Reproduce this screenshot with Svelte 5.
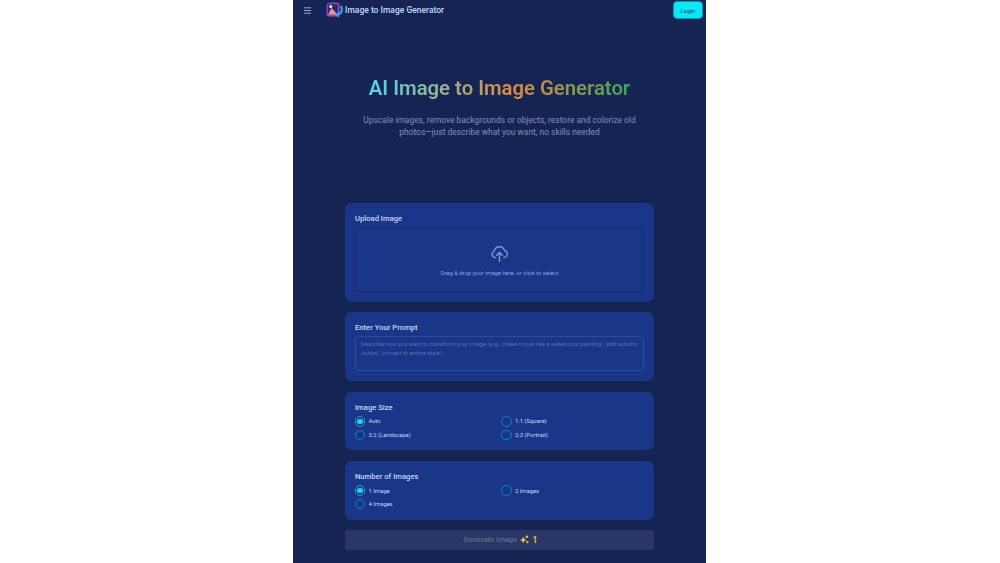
<script>
  const sizes = [
    { label: 'Auto', on: true },
    { label: '1:1 (Square)' },
    { label: '3:2 (Landscape)' },
    { label: '2:3 (Portrait)' }
  ];
  const counts = [
    { label: '1 Image', on: true },
    { label: '2 Images' },
    { label: '4 Images' }
  ];
</script>

{#snippet radios(items)}
  <div class="radios">
    {#each items as item}
      <div class="radio-item">
        <span class="radio" class:on={item.on}></span>
        <span>{item.label}</span>
      </div>
    {/each}
  </div>
{/snippet}

<div class="page">
  <div class="phone">
    <header>
      <div class="left">
        <svg class="menu" width="8" height="7" viewBox="0 0 8 7"><path d="M0 .8h7M0 3.500h7M0 6.200h7" stroke="#98a8c8" stroke-width="1" fill="none"/></svg>
        <svg class="logo" width="18" height="16" viewBox="0 0 18 16">
          <defs>
            <linearGradient id="lg" x1="0" y1="0" x2="1" y2="1"><stop offset="0" stop-color="#5a45d0"/><stop offset="1" stop-color="#b84fb0"/></linearGradient>
            <linearGradient id="ph" x1="0" y1="0" x2="1" y2="1"><stop offset="0" stop-color="#f2a070"/><stop offset="1" stop-color="#ee82c0"/></linearGradient>
          </defs>
          <rect x="0.500" y="0.500" width="13" height="14" rx="3" fill="url(#lg)"/>
          <rect x="2.200" y="2.200" width="9.600" height="10.600" rx="1.200" fill="#33265f"/>
          <path d="M2.200 12.800 L5.500 6 L11.800 12.800Z" fill="url(#ph)"/>
          <circle cx="4.800" cy="4.500" r="1.500" fill="#fde6d0"/>
          <path d="M14.800 4c2.400 3.200 1 7.600-3 9" stroke="#3f9fe6" stroke-width="2.200" fill="none"/>
          <path d="M8 12.800l5-2.800v5.600z" fill="#3f9fe6"/>
        </svg>
        <span class="brand">Image to Image Generator</span>
      </div>
      <button class="login">Login</button>
    </header>

    <section class="hero">
      <h1>AI Image to Image Generator</h1>
      <p>Upscale images, remove backgrounds or objects, restore and colorize old photos—just describe what you want, no skills needed</p>
    </section>

    <main>
      <div class="card">
        <div class="label">Upload Image</div>
        <div class="drop">
          <svg width="17" height="18" viewBox="0 0 17 18" fill="none" stroke="#7f9ad6" stroke-width="1.300" stroke-linecap="round" stroke-linejoin="round">
            <path d="M8.500 8.500V17.500"/>
            <path d="M5.600 11.300 8.500 8.500 11.400 11.300"/>
            <path d="M4.600 13.600A3.500 3.500 0 0 1 3.400 6.800 5.200 5.200 0 0 1 13.400 6.300 3.700 3.700 0 0 1 12.600 13.600"/>
          </svg>
          <span>Drag &amp; drop your image here, or click to select</span>
        </div>
      </div>

      <div class="card">
        <div class="label">Enter Your Prompt</div>
        <div class="prompt">Describe how you want to transform your image (e.g., 'make it look like a watercolor painting', 'add autumn colors', 'convert to anime style')</div>
      </div>

      <div class="card">
        <div class="label tight">Image Size</div>
        {@render radios(sizes)}
      </div>

      <div class="card">
        <div class="label tight">Number of Images</div>
        {@render radios(counts)}
      </div>

      <button class="generate">
        <span>Generate Image</span>
        <svg width="9" height="9" viewBox="0 0 10 10" fill="#f5c542"><path d="M3.600 2 4.800 4.500 7.200 5.600 4.800 6.700 3.600 9.200 2.400 6.700 0 5.600 2.400 4.500Z"/><circle cx="7.600" cy="2" r="1.400"/><circle cx="8.300" cy="8" r="1.200"/></svg>
        <b>1</b>
      </button>
    </main>
  </div>
</div>

<style>
  :global(body) {
    margin: 0;
    background: #fff;
    font-family: Roboto, "Liberation Sans", sans-serif;
  }
  .page {
    display: flex;
    justify-content: center;
    height: 563px;
    overflow: hidden;
  }
  .phone {
    width: 413px;
    margin-left: -1px;
    background: #162454;
    display: flex;
    flex-direction: column;
  }
  header {
    display: flex;
    justify-content: space-between;
    align-items: flex-start;
    height: 20px;
    padding: 1px 3px 0 11px;
  }
  .left {
    display: flex;
    align-items: center;
    height: 18px;
  }
  .menu { margin-right: 14px; }
  .logo { margin-right: 1px; }
  .brand {
    font-size: 8.500px;
    font-weight: 500;
    color: #bfdbfe;
  }
  .login {
    width: 30px;
    height: 18px;
    padding: 0;
    border: 1px solid #0891b2;
    border-radius: 4px;
    background: #08e8f5;
    color: #14606f;
    font: 500 6px Roboto, sans-serif;
  }
  .hero {
    height: 180px;
    padding-top: 53px;
    box-sizing: border-box;
    text-align: center;
  }
  h1 {
    margin: 0 auto;
    font-size: 20.300px;
    line-height: 28px;
    font-weight: 600;
    background: linear-gradient(90deg, #4fd8ea 0%, #e08b3c 55%, #3fa35c 100%);
    background-clip: text;
    -webkit-background-clip: text;
    color: transparent;
    width: 262px;
    white-space: nowrap;
  }
  .hero p {
    margin: 12px auto 0;
    width: 290px;
    font-size: 8.420px;
    line-height: 12.200px;
    color: #8090b8;
  }
  main {
    width: 309.500px;
    margin: 1.500px auto 0;
    display: flex;
    flex-direction: column;
    gap: 10.400px;
  }
  .card {
    background: #1a3688;
    border-radius: 7px;
    padding: 10.200px;
  }
  .label {
    font-size: 7.650px;
    line-height: 12px;
    font-weight: 500;
    color: #c4d9f8;
    margin-bottom: 2px;
  }
  .label.tight { margin-bottom: 2.200px; }
  .drop {
    height: 65px;
    box-sizing: border-box;
    border: 1px dotted #12224f;
    border-radius: 6px;
    display: flex;
    flex-direction: column;
    align-items: center;
    justify-content: center;
    gap: 8px;
    padding-top: 1px;
    font-size: 5.800px;
    color: #8ea6d8;
  }
  .prompt {
    height: 34.800px;
    box-sizing: border-box;
    border: 1px solid #2f4a9a;
    border-radius: 4px;
    padding: 3px 5px;
    font-size: 5.900px;
    line-height: 9px;
    color: #5a71b4;
  }
  .radios {
    display: grid;
    grid-template-columns: 146.500px 1fr;
    row-gap: 3.100px;
  }
  .radio-item {
    display: flex;
    align-items: center;
    gap: 3px;
    height: 10.500px;
    font-size: 5.900px;
    color: #c4d9f8;
  }
  .radio {
    width: 10.500px;
    height: 10.500px;
    border: 1px solid #1280c8;
    border-radius: 50%;
    position: relative;
    box-sizing: border-box;
    flex: none;
  }
  .radio.on {
    border-color: #1a9fd8;
  }
  .radio.on::after {
    content: "";
    position: absolute;
    inset: 1.500px;
    border-radius: 50%;
    background: #22d3ee;
  }
  .generate {
    height: 20px;
    border: 0;
    border-radius: 3px;
    background: #2a3766;
    color: #5e6b93;
    font: 500 7.600px Roboto, sans-serif;
    display: flex;
    align-items: center;
    justify-content: center;
    gap: 3px;
    padding: 0 0 0 2px;
  }
  .generate b {
    color: #f5c542;
    font-weight: 600;
    font-size: 8.600px;
  }
</style>
